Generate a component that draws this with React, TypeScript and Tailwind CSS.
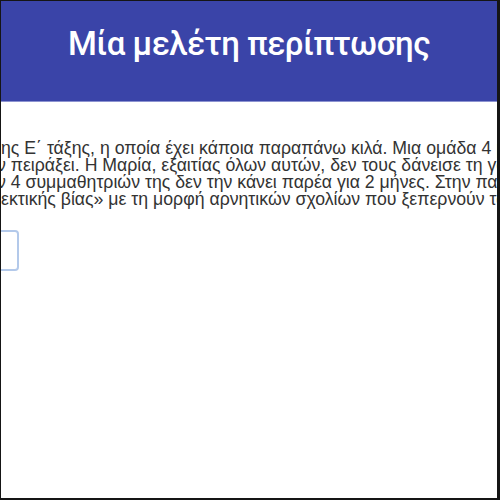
import React from 'react';

const lines = [
  { text: 'ης Ε΄ τάξης, η οποία έχει κάποια παραπάνω κιλά. Μια ομάδα 4 μαθητών', shift: 'ml-0' },
  { text: 'ν πειράξει. Η Μαρία, εξαιτίας όλων αυτών, δεν τους δάνεισε τη γόμα της', shift: '-ml-[4px]' },
  { text: 'ν 4 συμμαθητριών της δεν την κάνει παρέα για 2 μήνες. Στην παρέα', shift: '-ml-[4px]' },
  { text: 'εκτικής βίας» με τη μορφή αρνητικών σχολίων που ξεπερνούν τα όρια', shift: 'ml-0' },
];

export default function App() {
  return (
    <div className="w-[500px] h-[500px] overflow-hidden bg-white border-l border-t border-r-[3px] border-b-2 border-[#151515]">
      {/* Header */}
      <div className="h-[101px] bg-[#3a44a8] border-b border-[#8c93d0] flex justify-center pt-[21px]">
        <h1
          className="text-white text-[33px] font-medium leading-[44px] tracking-[-0.5px]"
          style={{ fontFamily: 'Roboto, "Noto Sans", sans-serif' }}
        >
          Μία μελέτη περίπτωσης
        </h1>
      </div>

      {/* Body text */}
      <div
        className="pt-[38px] text-[17.7px] leading-[17px] text-[#333333]"
        style={{ fontFamily: '"Liberation Sans", Arial, sans-serif' }}
      >
        {lines.map((line, i) => (
          <div key={i} className={`whitespace-nowrap ${line.shift}`}>
            {line.text}
          </div>
        ))}
      </div>

      {/* Answer box */}
      <div className="mt-[22px] -ml-[23px] w-[41px] h-[41px] rounded-[4px] border-2 border-[#b3c9ea] bg-white" />
    </div>
  );
}
